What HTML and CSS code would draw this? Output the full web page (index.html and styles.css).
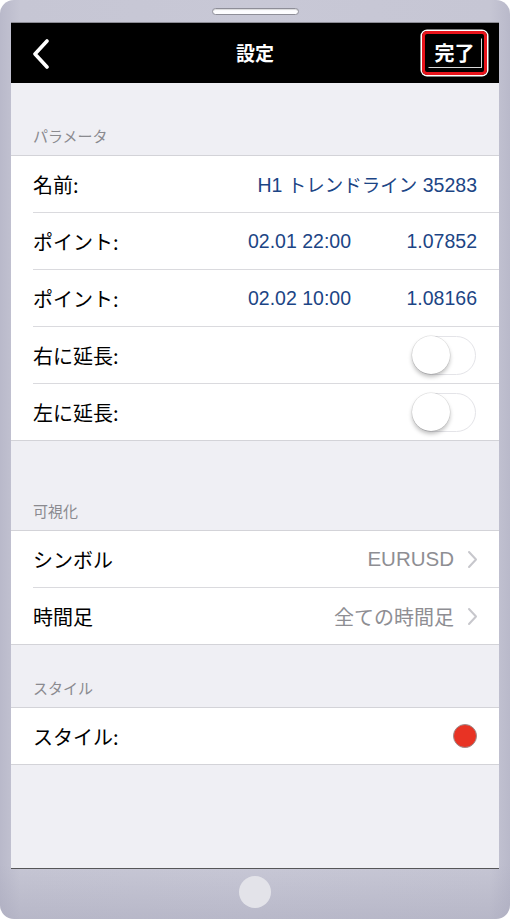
FILE: index.html
```html
<!DOCTYPE html>
<html lang="ja">
<head>
<meta charset="utf-8">
<title>設定</title>
<link rel="stylesheet" href="styles.css">
</head>
<body>
<div class="phone">
  <div class="speaker"></div>
  <div class="screen">
    <header class="navbar">
      <svg class="back" width="20" height="30" viewBox="0 0 20 30"><polyline points="16,2 4,15 16,28" fill="none" stroke="#fff" stroke-width="3.6" stroke-linecap="round" stroke-linejoin="round"/></svg>
      <div class="title">設定</div>
      <div class="done"><span>完了</span></div>
    </header>
    <div class="content">
      <div class="sec-head first">パラメータ</div>
      <div class="group">
        <div class="row"><span class="label">名前:</span><span class="val">H1 <span class="jp">トレンドライン</span> 35283</span></div>
        <div class="row"><span class="label fixed">ポイント:</span><span class="val">02.01 22:00</span><span class="val push">1.07852</span></div>
        <div class="row"><span class="label fixed">ポイント:</span><span class="val">02.02 10:00</span><span class="val push">1.08166</span></div>
        <div class="row"><span class="label">右に延長:</span><span class="toggle"><span class="knob"></span></span></div>
        <div class="row"><span class="label">左に延長:</span><span class="toggle"><span class="knob"></span></span></div>
      </div>
      <div class="sec-head second">可視化</div>
      <div class="group">
        <div class="row"><span class="label">シンボル</span><span class="gray latin">EURUSD</span><svg class="chev" width="11" height="19" viewBox="0 0 11 19"><polyline points="2,2 9,9.5 2,17" fill="none" stroke="#c7c7cc" stroke-width="2" stroke-linecap="round" stroke-linejoin="round"/></svg></div>
        <div class="row"><span class="label">時間足</span><span class="gray">全ての時間足</span><svg class="chev" width="11" height="19" viewBox="0 0 11 19"><polyline points="2,2 9,9.5 2,17" fill="none" stroke="#c7c7cc" stroke-width="2" stroke-linecap="round" stroke-linejoin="round"/></svg></div>
      </div>
      <div class="sec-head third">スタイル</div>
      <div class="group">
        <div class="row"><span class="label">スタイル:</span><span class="dot"></span></div>
      </div>
    </div>
  </div>
  <div class="home"></div>
</div>
</body>
</html>
```

FILE: styles.css
```css
html, body {
  margin: 0;
  padding: 0;
  background: #fff;
}
body {
  font-family: "Noto Sans CJK JP", "Liberation Sans", sans-serif;
}
.phone {
  width: 510px;
  height: 919px;
  box-sizing: border-box;
  border-radius: 14px;
  background:
    linear-gradient(to bottom, rgba(170,170,190,0) 0, rgba(170,170,190,0) 94%, rgba(165,165,185,0.45) 100%),
    linear-gradient(to right, #b9b9ca 0, #c6c6d4 4%, #c8c8d6 50%, #c6c6d4 96%, #b9b9ca 100%);
  display: flex;
  flex-direction: column;
  align-items: center;
  overflow: hidden;
}
.speaker {
  width: 85px;
  height: 5px;
  margin: 8px 0 7px;
  border: 1px solid #8e8e98;
  border-radius: 4px;
  background: #fdfdff;
  box-shadow: inset 0 1px 1px rgba(0,0,0,0.15);
  flex: none;
}
.screen {
  width: 488px;
  height: 847px;
  box-sizing: border-box;
  border-top: 1px solid #8c8c95;
  border-bottom: 1px solid #555558;
  background: #efeff4;
  display: flex;
  flex-direction: column;
  flex: none;
}
.navbar {
  height: 60px;
  background: #000;
  display: flex;
  align-items: center;
  position: relative;
  flex: none;
}
.back {
  margin-left: 20px;
  margin-top: 1px;
}
.title {
  position: absolute;
  left: 0;
  right: 0;
  text-align: center;
  color: #fff;
  font-size: 19px;
  font-weight: 700;
  line-height: 60px;
  pointer-events: none;
}
.done {
  margin-left: auto;
  margin-right: 12px;
  width: 59px;
  height: 38px;
  border: 3px solid #e8141c;
  border-radius: 5px;
  box-shadow: 0 0 0 1.5px #fff;
  display: flex;
  align-items: center;
  justify-content: center;
}
.done span {
  color: #fff;
  font-size: 20px;
  font-weight: 700;
  line-height: 28px;
  padding: 0 6px;
  border: 1px solid #d8d8d8;
  border-left-color: transparent;
  border-top-color: transparent;
}
.content {
  flex: 1;
  display: flex;
  flex-direction: column;
}
.sec-head {
  display: flex;
  align-items: flex-end;
  box-sizing: border-box;
  padding: 0 0 9px 22px;
  font-size: 15px;
  line-height: 20px;
  color: #8a8a8f;
  flex: none;
}
.sec-head.first { height: 72px; }
.sec-head.second { height: 89px; }
.sec-head.third { height: 62px; }
.group {
  background: #fff;
  border-top: 1px solid #d3d3d8;
  border-bottom: 1px solid #d3d3d8;
}
.row {
  height: 56px;
  margin-left: 22px;
  padding-right: 22px;
  display: flex;
  align-items: center;
  border-bottom: 1px solid #dadade;
  font-size: 20px;
  color: #000;
}
.row:last-child {
  border-bottom: none;
}
.label {
  flex: 1;
  white-space: nowrap;
}
.label.fixed {
  flex: none;
  width: 215px;
}
.val {
  font-family: "Liberation Sans", "Noto Sans CJK JP", sans-serif;
  font-size: 19.5px;
  color: #1c4585;
  white-space: nowrap;
}
.val .jp {
  font-family: "Noto Sans CJK JP", sans-serif;
  font-size: 18.5px;
}
.val.push {
  margin-left: auto;
}
.gray {
  color: #8e8e93;
  font-size: 20px;
  white-space: nowrap;
}
.gray.latin {
  font-family: "Liberation Sans", sans-serif;
  font-size: 20.5px;
}
.chev {
  margin-left: 13px;
  margin-right: -1px;
}
.toggle {
  width: 62px;
  height: 37px;
  border: 1.5px solid #e4e4e8;
  border-radius: 20px;
  background: #fff;
  position: relative;
  margin-right: 1px;
}
.knob {
  position: absolute;
  left: -1px;
  top: -1px;
  width: 38px;
  height: 38px;
  border-radius: 50%;
  background: #fff;
  box-shadow: 0 3px 4px rgba(0,0,0,0.25), 0 0 0 0.5px rgba(0,0,0,0.12);
}
.dot {
  width: 22px;
  height: 22px;
  border-radius: 50%;
  background: #e83324;
  border: 1px solid #9b8f8f;
}
.home {
  width: 32px;
  height: 32px;
  border-radius: 50%;
  background: #e3e3e9;
  margin-top: 7px;
  flex: none;
}
```
